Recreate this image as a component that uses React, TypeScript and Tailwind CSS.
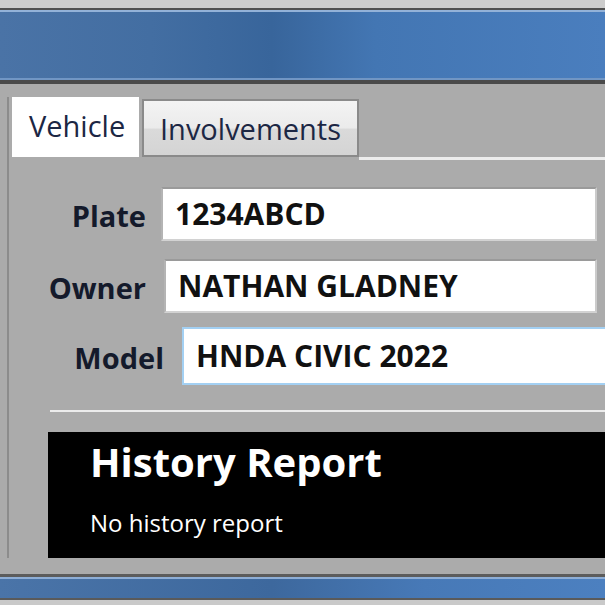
import React from 'react';

const fields = [
    { label: 'Plate', value: '1234ABCD', labelW: 'w-[137px]', gap: 'ml-[15px]', inputW: 'w-[436px] h-[54px]', top: 'mt-0', focused: false },
    { label: 'Owner', value: 'NATHAN GLADNEY', labelW: 'w-[137px]', gap: 'ml-[18px]', inputW: 'w-[433px] h-[54px]', top: 'mt-[18px]', focused: false },
    { label: 'Model', value: 'HNDA CIVIC 2022', labelW: 'w-[155px]', gap: 'ml-[18px]', inputW: 'w-[440px] h-[58px]', top: 'mt-[14px]', focused: true },
];

const App = () => {
    return (
        <div className="w-[605px] h-[605px] overflow-hidden bg-[#ababab] flex flex-col font-['Open_Sans',sans-serif]">
            {/* window chrome (top) */}
            <div className="h-[8px] shrink-0 bg-[#cdcdcd]" />
            <div className="h-[2px] shrink-0 bg-[#505050]" />
            <div className="h-[70px] shrink-0 border-t-2 border-b-2 border-t-[#93b2d8] border-b-[#7196c4] bg-[linear-gradient(90deg,#4a73a6_0%,#436ea2_25%,#38659b_45%,#4376b3_62%,#4a7ebe_100%)]" />
            <div className="h-[4px] shrink-0 bg-[#4a4a4a]" />

            <div className="flex-1 pl-[7px] pt-[13px]">
                <div className="h-[461px] border-l-2 border-[#8c8c8c] flex flex-col">
                    {/* tabs */}
                    <div className="flex items-start h-[63px] shrink-0">
                        <div className="ml-[3px] w-[127px] h-[60px] bg-white pl-[17px] pt-[9px] text-[29px] leading-[40px] text-[#1c2744]">
                            Vehicle
                        </div>
                        <div className="ml-[3px] mt-[2px] w-[217px] h-[58px] border-2 border-[#8a8a8a] bg-[linear-gradient(180deg,#f3f3f3_0%,#ebebeb_50%,#dadada_52%,#d4d4d4_100%)] pl-[16px] pt-[8px] text-[29px] leading-[40px] text-[#1c2744]">
                            Involvements
                        </div>
                        <div className="flex-1 mt-[60px] h-[3px] bg-[#ececec]" />
                    </div>

                    {/* panel */}
                    <div className="flex-1 pt-[27px] flex flex-col">
                        {fields.map(f => (
                            <div key={f.label} className={`flex items-center ${f.top}`}>
                                <div className={`${f.labelW} shrink-0 text-right text-[29px] font-bold leading-[40px] pt-[3px] text-[#141a2b]`}>
                                    {f.label}
                                </div>
                                <div
                                    className={`${f.gap} ${f.inputW} shrink-0 flex items-center pl-[12px] bg-white border-2 ${f.focused ? 'border-[#a3d0f3]' : 'border-t-[#9a9a9a] border-l-[#b4b4b4] border-r-[#cbcbcb] border-b-[#d2d2d2]'}`}
                                >
                                    <input
                                        readOnly
                                        value={f.value}
                                        className="w-full bg-transparent outline-none text-[30px] font-bold leading-[40px] text-[#111111]"
                                    />
                                </div>
                            </div>
                        ))}

                        <div className="mt-[25px] ml-[41px] h-[2px] bg-[#ececec]" />

                        <div className="mt-[20px] ml-[39px] h-[126px] bg-black pl-[42px] pt-[6px] text-white">
                            <div className="text-[40px] font-bold leading-[48px]">History Report</div>
                            <div className="mt-[22px] text-[24px] leading-[30px]">No history report</div>
                        </div>
                    </div>
                </div>
            </div>

            {/* window chrome (bottom) */}
            <div className="h-[3px] shrink-0 bg-[#5c5c5c]" />
            <div className="h-[21px] shrink-0 border-t-2 border-[#8eaed6] bg-[linear-gradient(90deg,#4a74a8_0%,#3d689d_45%,#4779b7_70%,#4c80c0_100%)]" />
            <div className="h-[2px] shrink-0 bg-[#5a5a5a]" />
            <div className="h-[5px] shrink-0 bg-[#c9c9c9]" />
        </div>
    );
};

export default App;
